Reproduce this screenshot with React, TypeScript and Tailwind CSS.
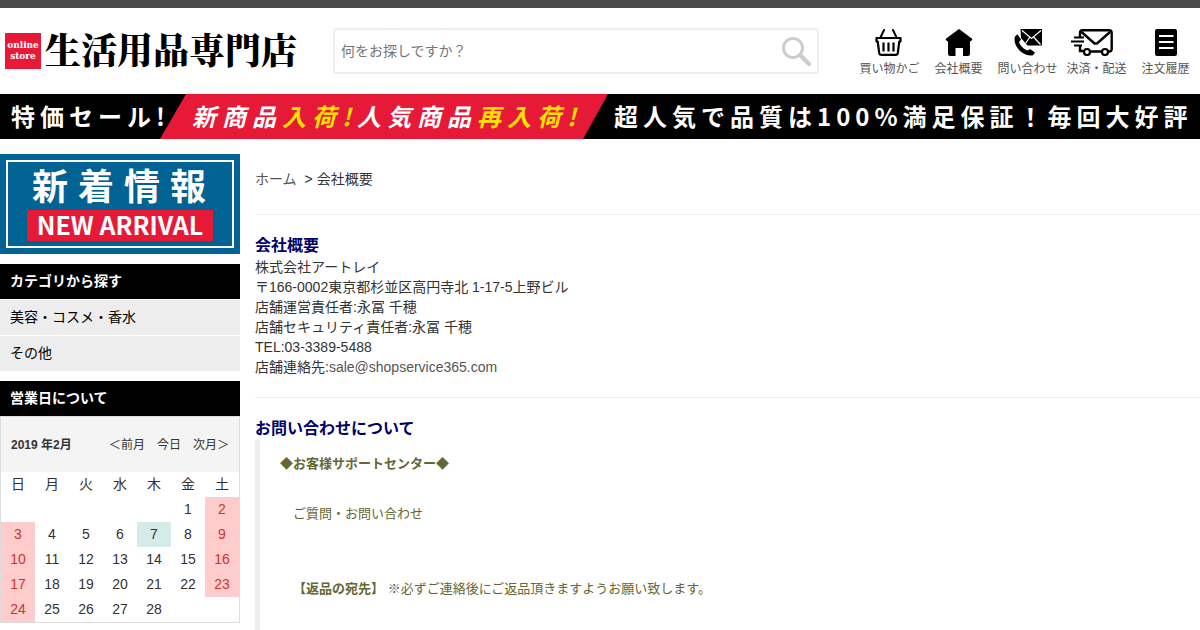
import type { ReactNode } from "react";

interface NavLink {
  label: string;
  icon: ReactNode;
}

interface DayCellProps {
  day: number | null;
  holiday: boolean;
  today: boolean;
}

const BasketIcon = () => (
  <svg width="30" height="27" viewBox="0 0 30 27" fill="none" stroke="#000" strokeLinecap="round" strokeLinejoin="round">
    <path d="M9 1L5.5 8.5M18 1l3.5 7.5" strokeWidth="2" />
    <path d="M1.5 9h24v3.5h-1.2L22.8 24q-.3 1.8-2 1.8H6.200q-1.700 0-2-1.800L2.700 12.500H1.500z" strokeWidth="2.200" />
    <path d="M8.500 13.500v9M13.500 13.500v9M18.500 13.500v9" strokeWidth="2.200" strokeLinecap="butt" />
  </svg>
);

const HouseIcon = () => (
  <svg width="28" height="27" viewBox="0 0 28 27">
    <path d="M14 0l13.500 10-1.500 2.300h-1V25q0 2-2 2h-5v-8h-7.500v8H5q-2 0-2-2V12.300H2L.500 10z" fill="#000" />
  </svg>
);

const ContactIcon = () => (
  <svg width="28" height="27" viewBox="0 0 28 27">
    <path
      d="M1 7.500L3.500 5.200 7 10.500 5 13c.9 3.400 4.600 7.200 9 8.600l2-1.600 5 3.500-2 2.700c-2.500 1-7.500 0-11.700-3.200C2.500 19.500-.8 12.500 1 7.500z"
      fill="#000"
    />
    <path d="M6.500 0H28v16.500H13.500L7 9z" fill="#000" />
    <path d="M8 1.500l9.500 8L27 1.500M11.500 14.500l4-6M26.500 15.500l-7-7.500" fill="none" stroke="#fff" strokeWidth="1.200" />
  </svg>
);

const DeliveryIcon = () => (
  <svg width="52" height="27" viewBox="0 0 52 27" fill="none" stroke="#000" strokeWidth="2.400">
    <path d="M9 8V4q0-2.700 2.700-2.700h26.500q2.500 0 2.500 2.700v16q0 2.500-2.500 2.500H14M9 16v6h3" />
    <path d="M10.500 3l13 11.500h2.500L39 3" />
    <path d="M3 8.500h10M0 12.500h13M3 16.500h8" strokeWidth="2" />
    <circle cx="16" cy="23" r="3" fill="#fff" strokeWidth="2.200" />
    <circle cx="34" cy="23" r="3" fill="#fff" strokeWidth="2.200" />
  </svg>
);

const HistoryIcon = () => (
  <svg width="22" height="27" viewBox="0 0 22 27">
    <rect width="22" height="27" rx="2" fill="#000" />
    <path d="M4 7h14.500M4 13h14.500M4 19h14.500" stroke="#fff" strokeWidth="2" />
  </svg>
);

const NAV_LINKS: NavLink[] = [
  { label: "買い物かご", icon: <BasketIcon /> },
  { label: "会社概要", icon: <HouseIcon /> },
  { label: "問い合わせ", icon: <ContactIcon /> },
  { label: "決済・配送", icon: <DeliveryIcon /> },
  { label: "注文履歴", icon: <HistoryIcon /> },
];

const CATEGORIES = ["美容・コスメ・香水", "その他"];

const WEEKDAYS = ["日", "月", "火", "水", "木", "金", "土"];

// February 2019 starts on a Friday
const WEEKS: (number | null)[][] = Array.from({ length: 5 }, (_, week) =>
  Array.from({ length: 7 }, (_, col) => {
    const day = week * 7 + col - 4;
    return day >= 1 && day <= 28 ? day : null;
  })
);

const COMPANY_LINES = [
  "株式会社アートレイ",
  "〒166-0002東京都杉並区高円寺北 1-17-5上野ビル",
  "店舗運営責任者:永冨 千穂",
  "店舗セキュリティ責任者:永冨 千穂",
  "TEL:03-3389-5488",
];

function Header() {
  return (
    <header className="flex items-start border-t-8 border-[#4a4a4a] pt-5 pb-[17px]">
      <a href="#" className="flex h-[46px] items-center gap-1 pl-[5px]">
        <span className="flex size-9 flex-col items-center justify-center bg-[#e61937] font-['DejaVu_Serif','Liberation_Serif',serif] text-[9px] leading-[11px] font-bold text-white">
          <span>online</span>
          <span>store</span>
        </span>
        <span className="pb-1 font-['Noto_Serif_CJK_JP','Noto_Sans_CJK_JP',serif] text-4xl leading-none font-black whitespace-nowrap text-black">
          生活用品専門店
        </span>
      </a>
      <form className="mx-9 flex h-[46px] min-w-0 flex-1 items-center rounded border-2 border-[#eee]">
        <input
          type="text"
          aria-label="商品検索"
          placeholder="何をお探しですか？"
          className="min-w-0 flex-1 px-1.5 text-sm outline-none placeholder:text-[#757575]"
        />
        <button type="submit" aria-label="検索" className="mr-1.5">
          <svg width="29" height="29" viewBox="0 0 29 29" fill="none" stroke="#ccc">
            <circle cx="11" cy="11" r="9.500" strokeWidth="3" />
            <path d="M18 18l9 9" strokeWidth="4" strokeLinecap="round" />
          </svg>
        </button>
      </form>
      <nav className="flex">
        {NAV_LINKS.map(({ label, icon }) => (
          <a
            key={label}
            href="#"
            className="flex w-[69px] flex-col items-center gap-[5px] pt-px text-xs whitespace-nowrap text-[#555]"
          >
            {icon}
            <span>{label}</span>
          </a>
        ))}
      </nav>
    </header>
  );
}

function SaleBanner() {
  return (
    <div className="flex h-[45px] items-center overflow-hidden bg-black font-['Noto_Sans_CJK_JP',sans-serif] text-2xl leading-none font-bold tracking-[5px] whitespace-nowrap text-white">
      <span className="w-40 shrink-0 pb-0.5 pl-[11px]">特価セール!</span>
      <span className="flex h-full w-[448px] shrink-0 items-center bg-[#e61937] pb-0.5 pl-8 tracking-[6px] italic [clip-path:polygon(26px_0,100%_0,calc(100%-25px)_100%,0_100%)]">
        新商品<span className="text-[#ffe100]">入荷!</span>人気商品
        <span className="text-[#ffe100]">再入荷!</span>
      </span>
      <span className="pb-0.5 pl-1.5">超人気で品質は100%満足保証！毎回大好評</span>
    </div>
  );
}

function PanelTitle({ children }: { children: ReactNode }) {
  return <h2 className="bg-black px-2.5 text-sm leading-[35px] font-bold text-white">{children}</h2>;
}

function NewArrival() {
  return (
    <a href="#" className="block h-[100px] bg-[#006394] p-1.5 font-['Noto_Sans_CJK_JP',sans-serif] font-bold text-white">
      <span className="flex h-full flex-col items-center gap-2 border-2 border-white pt-1">
        <span className="pl-2 text-4xl leading-9 tracking-[10px]">新着情報</span>
        <span className="bg-[#e61937] px-2.5 pb-0.5 text-[25px] leading-[29px]">NEW ARRIVAL</span>
      </span>
    </a>
  );
}

function DayCell({ day, holiday, today }: DayCellProps) {
  const color = holiday ? "bg-[#ffcccc] text-[#cc3333]" : today ? "bg-[#d5ebe7]" : "";
  return <td className={`h-[25px] p-0 text-center align-top ${color}`}>{day}</td>;
}

function Calendar() {
  return (
    <div className="border border-[#ddd]">
      <div className="flex h-[55px] items-center justify-between bg-[#f4f4f4] px-2.5 text-xs">
        <strong>2019 年2月</strong>
        <div className="flex gap-3">
          <a href="#">＜前月</a>
          <a href="#">今日</a>
          <a href="#">次月＞</a>
        </div>
      </div>
      <table className="w-full border-collapse text-sm leading-6">
        <thead>
          <tr>
            {WEEKDAYS.map((name) => (
              <th key={name} className="h-[25px] p-0 align-top font-normal">
                {name}
              </th>
            ))}
          </tr>
        </thead>
        <tbody>
          {WEEKS.map((week, i) => (
            <tr key={i}>
              {week.map((day, col) => (
                <DayCell
                  key={col}
                  day={day}
                  holiday={day !== null && (col === 0 || col === 6)}
                  today={day === 7}
                />
              ))}
            </tr>
          ))}
        </tbody>
      </table>
    </div>
  );
}

function Sidebar() {
  return (
    <aside className="flex w-60 shrink-0 flex-col gap-2.5">
      <NewArrival />
      <section>
        <PanelTitle>カテゴリから探す</PanelTitle>
        <ul>
          {CATEGORIES.map((name) => (
            <li key={name} className="mt-px bg-[#ededed]">
              <a href="#" className="block px-2.5 text-sm leading-[35px] text-black">
                {name}
              </a>
            </li>
          ))}
        </ul>
      </section>
      <section>
        <PanelTitle>営業日について</PanelTitle>
        <Calendar />
      </section>
    </aside>
  );
}

function Content() {
  return (
    <main className="flex min-w-0 flex-1 flex-col text-sm leading-5">
      <nav className="flex gap-2 border-b border-[#eee] pt-[15px] pb-[25px]">
        <a href="#" className="text-[#555]">
          ホーム
        </a>
        <span>&gt; 会社概要</span>
      </nav>
      <section className="border-b border-[#eee] pt-5 pb-5">
        <h1 className="text-base leading-[22px] font-bold text-[#000066]">会社概要</h1>
        {COMPANY_LINES.map((line) => (
          <p key={line}>{line}</p>
        ))}
        <p>
          店舗連絡先:
          <a href="mailto:sale@shopservice365.com" className="text-[#555]">
            sale@shopservice365.com
          </a>
        </p>
      </section>
      <section className="flex flex-1 flex-col pt-5">
        <h2 className="text-base leading-[22px] font-bold text-[#000066]">お問い合わせについて</h2>
        <div className="flex-1 border-l-[5px] border-[#ededed] pt-[11px] pl-5 text-[13px] leading-[25px] text-[#666633]">
          <p className="mb-[25px] font-bold">◆お客様サポートセンター◆</p>
          <p className="mb-[50px] pl-[13px]">ご質問・お問い合わせ</p>
          <p className="pl-[13px]">
            <strong>【返品の宛先】</strong> ※必ずご連絡後にご返品頂きますようお願い致します。
          </p>
        </div>
      </section>
    </main>
  );
}

export default function App() {
  return (
    <div className="flex min-h-screen flex-col bg-white font-['Liberation_Sans','Noto_Sans_CJK_JP',sans-serif] text-[#333]">
      <Header />
      <SaleBanner />
      <div className="flex flex-1 gap-[15px] pt-[15px]">
        <Sidebar />
        <Content />
      </div>
    </div>
  );
}
